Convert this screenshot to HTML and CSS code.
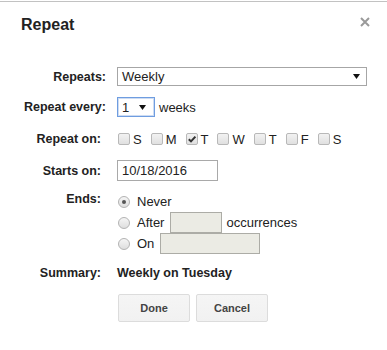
FILE: index.html
```html
<!DOCTYPE html>
<html lang="en">
<head>
<meta charset="utf-8">
<title>Repeat</title>
<link rel="stylesheet" href="styles.css">
</head>
<body>
<div class="dialog">
  <div class="header">
    <h1 class="title">Repeat</h1>
    <span class="close" aria-label="Close">
      <svg width="10" height="10" viewBox="0 0 10 10"><path d="M1 1L9 9M9 1L1 9" stroke="#9a9a9a" stroke-width="2"/></svg>
    </span>
  </div>
  <div class="form">
    <div class="row r-repeats">
      <span class="lbl">Repeats:</span>
      <div class="sel sel-wide" role="combobox">
        <span>Weekly</span>
        <svg class="arrow" width="7" height="5" viewBox="0 0 7 5"><path d="M0 0h7L3.5 5z" fill="#111"/></svg>
      </div>
    </div>
    <div class="row r-every">
      <span class="lbl">Repeat every:</span>
      <div class="sel sel-num" role="combobox">
        <span>1</span>
        <svg class="arrow" width="7" height="5" viewBox="0 0 7 5"><path d="M0 0h7L3.5 5z" fill="#111"/></svg>
      </div>
      <span class="unit">weeks</span>
    </div>
    <div class="row r-on">
      <span class="lbl inset">Repeat on:</span>
      <div class="days">
        <label class="day"><span class="cb"></span>S</label>
        <label class="day"><span class="cb"></span>M</label>
        <label class="day"><span class="cb checked"><svg width="10" height="10" viewBox="0 0 10 10"><path d="M1.8 5.2L4 7.4L8.4 2.6" fill="none" stroke="#333" stroke-width="2"/></svg></span>T</label>
        <label class="day"><span class="cb"></span>W</label>
        <label class="day"><span class="cb"></span>T</label>
        <label class="day"><span class="cb"></span>F</label>
        <label class="day"><span class="cb"></span>S</label>
      </div>
    </div>
    <div class="row r-starts">
      <span class="lbl inset">Starts on:</span>
      <div class="field f-date">10/18/2016</div>
    </div>
    <div class="row r-ends">
      <span class="lbl inset ends-lbl">Ends:</span>
      <div class="options">
        <label class="opt"><span class="rb checked"></span>Never</label>
        <label class="opt"><span class="rb"></span>After<span class="field disabled f-count"></span><span class="occ">occurrences</span></label>
        <label class="opt"><span class="rb"></span>On<span class="field disabled f-ondate"></span></label>
      </div>
    </div>
    <div class="row r-summary">
      <span class="lbl inset">Summary:</span>
      <span class="summary">Weekly on Tuesday</span>
    </div>
    <div class="buttons">
      <button class="btn" type="button">Done</button>
      <button class="btn" type="button">Cancel</button>
    </div>
  </div>
</div>
</body>
</html>
```

FILE: styles.css
```css
* { box-sizing: border-box; }
html, body { margin: 0; padding: 0; background: #fff; }
body {
  font-family: "Liberation Sans", Arial, sans-serif;
  font-size: 13px;
  color: #222;
}
.dialog {
  margin-top: 1px;
  border-top: 1px solid #c2c2c2;
  height: 349px;
}
.header {
  display: flex;
  justify-content: space-between;
  align-items: flex-start;
  padding: 13px 17px 0 21px;
}
.title {
  margin: 0;
  font-size: 16px;
  font-weight: bold;
  line-height: 20px;
  color: #222;
}
.close { display: block; margin-top: 2px; width: 10px; height: 10px; }
.close svg { display: block; }

.form { margin-top: 32px; }
.row { display: flex; align-items: center; }
.lbl {
  width: 106px;
  flex: none;
  margin-right: 11px;
  text-align: right;
  font-weight: bold;
  font-size: 12.5px;
  color: #222;
}
.lbl.inset { padding-right: 5px; }

.sel {
  display: flex;
  align-items: center;
  justify-content: space-between;
  background: #fff;
  color: #222;
}
.sel .arrow { display: block; flex: none; }
.sel-wide {
  width: 250px;
  height: 19px;
  border: 1px solid #a6a6a6;
  padding: 0 6px 0 4px;
}
.sel-num {
  width: 38px;
  height: 20px;
  border: 1px solid #6f9de0;
  box-shadow: inset 0 0 0 1px #cddcf3;
  padding: 0 8px 0 4px;
}
.unit { margin-left: 4px; }

.r-every { margin-top: 11px; }
.r-on { margin-top: 12px; height: 20px; }
.r-starts { margin-top: 11px; }
.r-ends { margin-top: 10px; align-items: flex-start; }
.r-summary { margin-top: 9px; height: 20px; }

.days { display: flex; align-items: center; margin-left: 1px; }
.day { display: flex; align-items: center; margin-right: 9px; }
.cb {
  width: 12px;
  height: 12px;
  margin-right: 3px;
  border: 1px solid #b8b8b8;
  border-radius: 2px;
  background: linear-gradient(#f2f2f2, #e0e0e0);
  display: flex;
  align-items: center;
  justify-content: center;
}
.cb svg { display: block; }

.field {
  height: 21px;
  border: 1px solid #a9a9a9;
  background: #fff;
  padding-left: 4px;
  display: flex;
  align-items: center;
  color: #222;
}
.f-date { width: 101px; }
.field.disabled { background: #ebebe4; border-color: #acaca6; }
.f-count { width: 52px; margin-left: 6px; }
.f-ondate { width: 100px; margin-left: 6px; }
.occ { margin-left: 4px; }

.ends-lbl { line-height: 17px; }
.options { display: flex; flex-direction: column; margin-left: 1px; }
.opt { display: flex; align-items: center; height: 21px; }
.rb {
  width: 12px;
  height: 12px;
  margin-right: 7px;
  border: 1px solid #b3b3b3;
  border-radius: 50%;
  background: linear-gradient(#f5f5f5, #dedede);
  display: flex;
  align-items: center;
  justify-content: center;
}
.rb.checked::after {
  content: "";
  width: 4px;
  height: 4px;
  border-radius: 50%;
  background: #555;
}

.summary { font-weight: bold; font-size: 12.5px; color: #222; }

.buttons { display: flex; margin: 11px 0 0 118px; }
.btn {
  width: 72px;
  height: 28px;
  margin-right: 6px;
  border: 1px solid #dcdcdc;
  border-radius: 2px;
  background: linear-gradient(#f5f5f5, #f1f1f1);
  font-family: "Liberation Sans", Arial, sans-serif;
  font-size: 11px;
  font-weight: bold;
  color: #444;
  padding: 0;
}
```
